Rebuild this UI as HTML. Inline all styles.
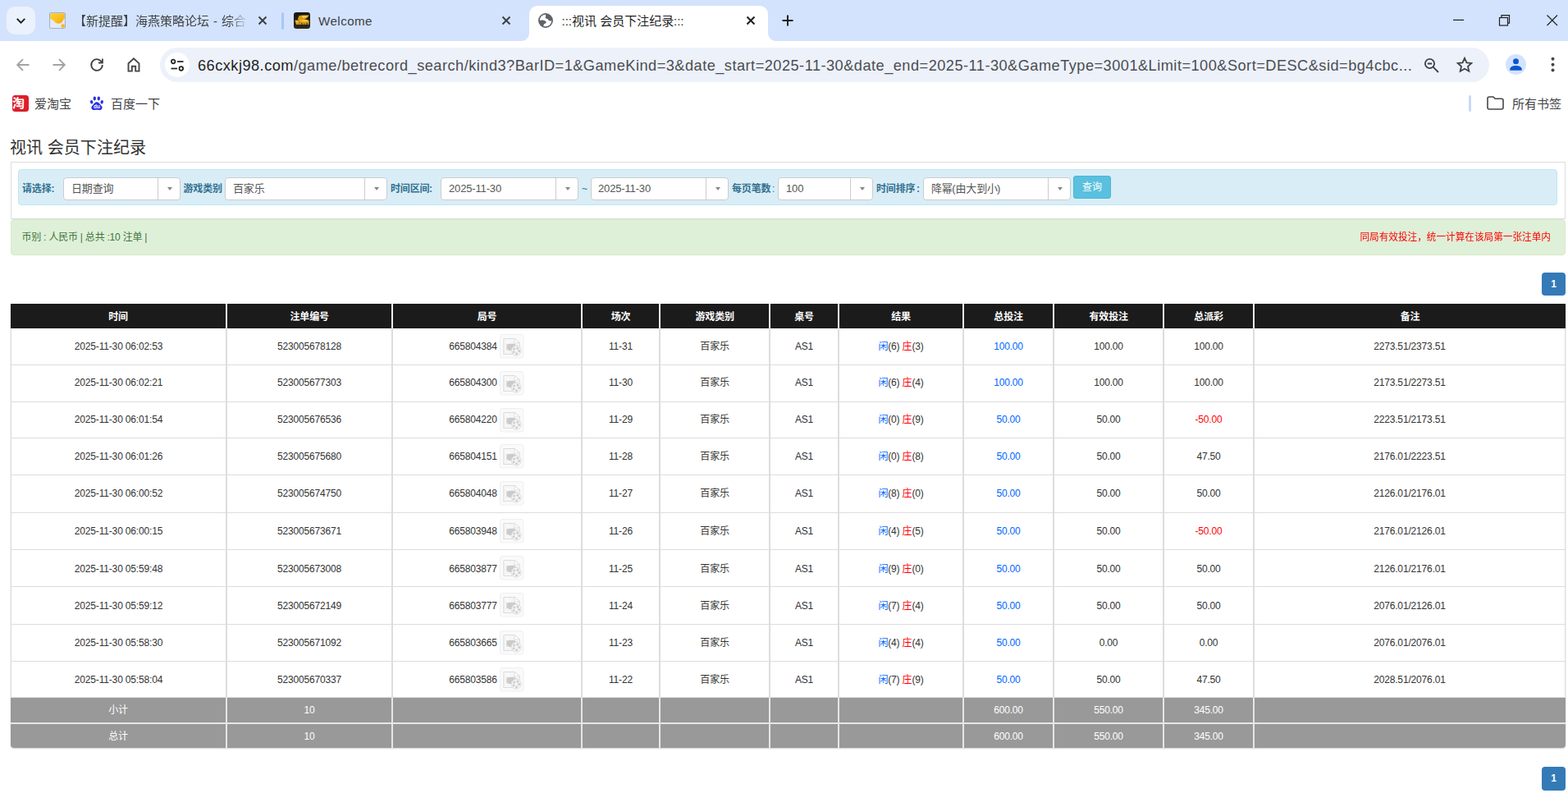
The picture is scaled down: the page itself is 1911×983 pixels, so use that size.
<!DOCTYPE html>
<html lang="zh-CN">
<head>
<meta charset="utf-8">
<title>:::视讯 会员下注纪录:::</title>
<style>
html,body{margin:0;padding:0}
body{width:1911px;height:983px;overflow:hidden;position:relative;background:#fff;font-family:"Liberation Sans","Noto Sans CJK SC",sans-serif;color:#333}
.abs{position:absolute}
.cj{display:inline-block;position:relative;white-space:nowrap;text-align:justify;text-align-last:justify;text-justify:inter-character;vertical-align:top}
svg{display:block}
/* ---------- browser chrome ---------- */
#tabstrip{position:absolute;left:0;top:0;width:1911px;height:50px;background:#d3e3fd}
#toolbar{position:absolute;left:0;top:50px;width:1911px;height:59px;background:#fff;border-top-left-radius:10px}
#bmbar{position:absolute;left:0;top:108px;width:1911px;height:38px;background:#fff}
.tabtxt{position:absolute;top:16px;height:20px;line-height:20px;font-size:15px;color:#3f4246;white-space:nowrap;overflow:hidden}
#tabsearch{position:absolute;left:8px;top:8px;width:35px;height:34px;border-radius:10px;background:#ebf1fd}
#acttab{position:absolute;left:645px;top:7px;width:291px;height:43px;background:#fff;border-radius:10px 10px 0 0}
#acttab:before,#acttab:after{content:"";position:absolute;bottom:0;width:10px;height:10px}
#acttab:before{left:-10px;background:radial-gradient(circle at 0 0,rgba(255,255,255,0) 9.5px,#fff 10.5px)}
#acttab:after{right:-10px;background:radial-gradient(circle at 100% 0,rgba(255,255,255,0) 9.5px,#fff 10.5px)}
#omni{position:absolute;left:195px;top:58px;width:1620px;height:42px;border-radius:21px;background:#edf1fa}
#siteinfo{position:absolute;left:201px;top:64px;width:30px;height:30px;border-radius:50%;background:#fff}
#url{position:absolute;left:241px;top:68px;height:24px;line-height:24px;font-size:18.200px;letter-spacing:.48px;color:#4a4d51;white-space:nowrap}
#url b{font-weight:normal;color:#1f1f1f}
.bm{position:absolute;top:117px;height:20px;line-height:20px;font-size:15px;color:#3f4246;white-space:nowrap}
/* ---------- page ---------- */
#title{position:absolute;left:12px;top:166px;height:28px;line-height:28px;font-size:20px;color:#333;white-space:nowrap}
#fbox{position:absolute;left:13px;top:197px;width:1893px;height:68px;border:1px solid #ddd;background:#fff}
#fin{position:absolute;left:22px;top:206px;width:1874px;height:42px;border:1px solid #bce8f1;border-radius:4px;background:#d9edf7}
.lb{position:absolute;top:221px;height:18px;line-height:18px;font-size:12px;letter-spacing:-.16px;font-weight:bold;color:#31708f;white-space:nowrap}
.sel{position:absolute;top:216px;height:26px;border:1px solid #ccc;border-radius:4px;background:#fff;box-sizing:content-box}
.sel .tx{position:absolute;left:9px;top:0;height:26px;line-height:26px;font-size:13px;letter-spacing:-.15px;color:#555;white-space:nowrap}
.sel .dv{position:absolute;right:26px;top:0;width:1px;height:26px;background:#ccc}
.sel .ar{position:absolute;right:9px;top:11px;width:0;height:0;border-left:3.500px solid transparent;border-right:3.500px solid transparent;border-top:4px solid #888}
#qbtn{position:absolute;left:1308px;top:214px;width:44px;height:26px;border:1px solid #46b8da;border-radius:3px;background:#5bc0de;color:#fff;font-size:12px;line-height:26px;text-align:center}
#gbar{position:absolute;left:13px;top:267px;width:1893px;height:42px;border:1px solid #d6e9c6;border-radius:4px;background:#dff0d8}
#gl{position:absolute;left:26.500px;top:279px;height:20px;line-height:20px;font-size:12px;letter-spacing:-.16px;color:#3c763d;white-space:nowrap}
#gr{position:absolute;right:21px;top:279px;height:20px;line-height:20px;font-size:12px;color:#f00;white-space:nowrap}
.pg{position:absolute;left:1879px;width:29px;border-radius:4px;background:#337ab7;color:#fff;font-weight:bold;font-size:12px;text-align:center}
table.grid{position:absolute;left:13px;top:370px;width:1895px;table-layout:fixed;border-collapse:separate;border-spacing:0;font-size:12px;letter-spacing:-.16px;color:#333;box-shadow:0 1px 2px rgba(0,0,0,.18);border-radius:0 0 4px 4px}
table.grid th,table.grid td{padding:0;line-height:14px;text-align:center;vertical-align:middle;box-sizing:border-box;white-space:nowrap;overflow:hidden}
table.grid th{height:30px;padding-top:2px;background:#1b1b1b;color:#fff;font-weight:bold;border-right:2px solid #ededed}
table.grid th:last-child{border-right:0}
table.grid tbody td{height:45px;border-right:2px solid #ddd;border-bottom:1px solid #ddd;background:#fff}
table.grid tbody td:first-child{border-left:1px solid #ddd}
table.grid tbody td:last-child{border-right:1px solid #ddd}
table.grid tfoot td{height:29px;background:#999;color:#fff;border-right:2px solid #e6e6e6}
table.grid tfoot td:last-child{border-right:0}
table.grid tfoot tr.f1 td{height:32px;border-bottom:2px solid #e6e6e6}
table.grid tfoot tr.f2 td:first-child{border-bottom-left-radius:4px}
table.grid tfoot tr.f2 td:last-child{border-bottom-right-radius:4px}
.b{color:#06f}.r{color:#f00}.neg{color:#f00}
span.b,span.r{width:11.840px;text-align:center;text-align-last:center;letter-spacing:0}
td.ju{position:relative}
td.ju .jn{position:relative;left:-17px}
td.ju svg.vid{position:absolute;left:130.400px;top:7px}
table.grid tbody tr.r0 td{height:45px;padding-bottom:0px}table.grid tbody tr.r1 td{height:45px;padding-bottom:2px}table.grid tbody tr.r2 td{height:44px;padding-bottom:2px}table.grid tbody tr.r3 td{height:45px;padding-bottom:0px}table.grid tbody tr.r4 td{height:46px;padding-bottom:1px}table.grid tbody tr.r5 td{height:45px;padding-bottom:0px}table.grid tbody tr.r6 td{height:45px;padding-top:1px}table.grid tbody tr.r7 td{height:46px;padding-bottom:0px}table.grid tbody tr.r8 td{height:45px;padding-bottom:0px}table.grid tbody tr.r9 td{height:44px;padding-bottom:0px}
</style>
</head>
<body>
<!-- ================= browser chrome ================= -->
<div id="tabstrip"></div>
<div id="tabsearch"><svg class="abs" style="left:12px;top:13.500px" width="11" height="8" viewBox="0 0 11 8"><path d="M1.400 1.500l4.100 4.100 4.100-4.100" fill="none" stroke="#1f1f1f" stroke-width="1.900" stroke-linecap="square"/></svg></div>

<!-- tab 1 -->
<svg class="abs" style="left:60px;top:15px" width="20" height="20" viewBox="0 0 20 20"><defs><linearGradient id="fg1" x1="0" y1="0" x2="1" y2="1"><stop offset="0" stop-color="#fdd32a"/><stop offset=".5" stop-color="#fcc21e"/><stop offset="1" stop-color="#f2a024"/></linearGradient></defs><rect x=".5" y=".5" width="19" height="19" rx="1.500" fill="#e3eaf5" stroke="#9cb0d3"/><path d="M1.200 1.200h17.600v6.200c-1 .7-1.600 1.400-1.900 2.400a6.100 6.100 0 0 1-10.800 1.300C5 9.800 3 9 1.200 7.600z" fill="url(#fg1)"/><circle cx="16.700" cy="16.600" r="2.300" fill="#fbb51c"/></svg>
<div class="tabtxt" style="left:90px;width:210px;-webkit-mask-image:linear-gradient(90deg,#000 190px,transparent 212px);mask-image:linear-gradient(90deg,#000 190px,transparent 212px)"><span class="cj" style="width:165px">【新提醒】海燕策略论坛</span><span style="display:inline-block;width:15px;text-align:center">-</span><span class="cj" style="width:60px">综合讨论</span></div>
<svg class="abs" style="left:314px;top:19px" width="12" height="12" viewBox="0 0 12 12"><path d="M1.5 1.5l9 9M10.5 1.5l-9 9" stroke="#3a3d41" stroke-width="1.900" fill="none"/></svg>
<div class="abs" style="left:343px;top:15px;width:3px;height:21px;border-radius:1.5px;background:#a8c7fa"></div>

<!-- tab 2 -->
<svg class="abs" style="left:358px;top:15px" width="20" height="20" viewBox="0 0 20 20"><defs><linearGradient id="fg2" x1="0" y1="0" x2="0" y2="1"><stop offset="0" stop-color="#161616"/><stop offset="1" stop-color="#2a2927"/></linearGradient></defs><rect width="20" height="20" rx="3.200" fill="url(#fg2)"/><g fill="#dc9a10"><path d="M5.800 4.400c3.500-1 8.500-.7 13-.8-1.200 2.600-3.800 4.700-7 5.600L7.500 9.500z"/><ellipse cx="13" cy="11" rx="5.900" ry="2.500"/><circle cx="7.600" cy="7.800" r="2.500"/><path d="M1.200 9.700l6.600-.4-1.300 5.600H3.100z"/><path d="M7.500 12h1.900v3.100H6.900zM10.800 12.500h1.700v2.600h-2.100zM13.600 12.500h1.700v2.600h-2.100zM16.800 11.500h1.800l-.3 3.600h-1.900z"/></g><g fill="#f7d054"><path d="M9.500 4.600c2.500-.5 5.500-.4 8-.4-1.500 1.400-3.500 2.300-6 2.800z"/><ellipse cx="13.200" cy="10.300" rx="3.800" ry="1.100"/><circle cx="8.300" cy="10.300" r=".9"/><circle cx="4" cy="11.600" r="1"/></g></svg>
<div class="tabtxt" style="left:388px;font-size:15.200px;letter-spacing:.42px">Welcome</div>
<svg class="abs" style="left:611px;top:19px" width="12" height="12" viewBox="0 0 12 12"><path d="M1.5 1.5l9 9M10.5 1.5l-9 9" stroke="#3a3d41" stroke-width="1.900" fill="none"/></svg>

<!-- active tab -->
<div id="acttab"></div>
<svg class="abs" style="left:656px;top:16px" width="18" height="18" viewBox="0 0 18 18"><circle cx="9" cy="9" r="8.100" fill="#fff" stroke="#5f6368" stroke-width="1.700"/><path d="M8.800 1.600c4.200-.4 7.600 2.700 8.200 6.600-1.400 1.800-3.400 1.500-4.600.300-.4-1.300-1.800-1.500-3.200-1.900-1-1.200.600-2.600-.400-5z" fill="#5f6368"/><path d="M1 9.100c2.900-1.200 6.500-.800 8.500 1.100.600 1.800-.600 2.500-2.200 2.900-1.200 1.100-.400 2.900-1.600 3.600C2.600 15.200 1 12.300 1 9.100z" fill="#5f6368"/></svg>
<div class="tabtxt" style="left:684.500px;color:#1f1f1f">:::<span class="cj" style="width:124px">视讯 会员下注纪录</span>:::</div>
<svg class="abs" style="left:909px;top:19px" width="12" height="12" viewBox="0 0 12 12"><path d="M1.5 1.5l9 9M10.5 1.5l-9 9" stroke="#1f1f1f" stroke-width="2" fill="none"/></svg>
<svg class="abs" style="left:953px;top:18px" width="14" height="14" viewBox="0 0 14 14"><path d="M7 .5v13M.5 7h13" stroke="#1f1f1f" stroke-width="2" fill="none"/></svg>

<!-- window controls -->
<svg class="abs" style="left:1771px;top:18px" width="14" height="14" viewBox="0 0 14 14"><path d="M0 6.400h13" stroke="#1f1f1f" stroke-width="1.200"/></svg>
<svg class="abs" style="left:1826px;top:17px" width="15" height="15" viewBox="0 0 15 15"><rect x="1.500" y="4.500" width="10" height="9.500" fill="none" stroke="#1f1f1f" stroke-width="1.200"/><path d="M4 4.500V1.600h9.500v9.500h-2" fill="none" stroke="#1f1f1f" stroke-width="1.200"/></svg>
<svg class="abs" style="left:1885px;top:18px" width="14" height="14" viewBox="0 0 14 14"><path d="M.5.500l12.500 12.500M13 .500L.5 13" stroke="#1f1f1f" stroke-width="1.100" fill="none"/></svg>

<!-- toolbar -->
<div id="toolbar"></div>
<svg class="abs" style="left:19px;top:70px" width="18" height="18" viewBox="0 0 18 18"><path d="M16.500 9H2.500M9 2.200L2.200 9 9 15.800" fill="none" stroke="#a3a3a3" stroke-width="1.900"/></svg>
<svg class="abs" style="left:63px;top:70px" width="18" height="18" viewBox="0 0 18 18"><path d="M1.500 9h14M9 2.200L15.800 9 9 15.800" fill="none" stroke="#a3a3a3" stroke-width="1.900"/></svg>
<svg class="abs" style="left:108px;top:69px" width="20" height="20" viewBox="0 0 20 20"><path d="M16.200 7.200A6.800 6.800 0 1 0 16.800 10" fill="none" stroke="#3f4246" stroke-width="1.800"/><path d="M16.900 2.500v5h-5" fill="none" stroke="#3f4246" stroke-width="1.800"/></svg>
<svg class="abs" style="left:153px;top:69px" width="20" height="20" viewBox="0 0 20 20"><path d="M3.500 8.300L10 2.300l6.500 6V17.600h-4.300v-5.900H7.800v5.900H3.500z" fill="none" stroke="#454746" stroke-width="1.900"/></svg>
<div id="omni"></div>
<div id="siteinfo"></div>
<svg class="abs" style="left:207px;top:71px" width="18" height="17" viewBox="0 0 18 17"><circle cx="4.200" cy="4" r="2.300" fill="none" stroke="#1f1f1f" stroke-width="1.700"/><path d="M9 4h7.500" stroke="#1f1f1f" stroke-width="1.700"/><circle cx="13.800" cy="12.500" r="2.300" fill="none" stroke="#1f1f1f" stroke-width="1.700"/><path d="M1.500 12.500H9" stroke="#1f1f1f" stroke-width="1.700"/></svg>
<div id="url"><b>66cxkj98.com</b>/game/betrecord_search/kind3?BarID=1&amp;GameKind=3&amp;date_start=2025-11-30&amp;date_end=2025-11-30&amp;GameType=3001&amp;Limit=100&amp;Sort=DESC&amp;sid=bg4cbc...</div>
<svg class="abs" style="left:1735px;top:70px" width="20" height="20" viewBox="0 0 20 20"><circle cx="7.500" cy="7.500" r="5.600" fill="none" stroke="#3f4246" stroke-width="1.800"/><path d="M11.700 11.700l6.300 6.300M4.800 7.500h5.400" stroke="#3f4246" stroke-width="1.800" fill="none"/></svg>
<svg class="abs" style="left:1775px;top:69px" width="20" height="20" viewBox="0 0 20 20"><path d="M10 1.800l2.500 5.500 6 .6-4.500 4 1.300 5.900L10 14.700l-5.300 3.100 1.300-5.900-4.500-4 6-.6z" fill="none" stroke="#3f4246" stroke-width="1.800" stroke-linejoin="miter"/></svg>
<div class="abs" style="left:1835px;top:66px;width:25px;height:25px;border-radius:50%;background:#d3e3fd"></div>
<svg class="abs" style="left:1839px;top:70px" width="17" height="17" viewBox="0 0 17 17"><circle cx="8.500" cy="4.800" r="3.500" fill="#0b57d0"/><path d="M1.300 15.800v-1.600c0-2.600 3.600-4.100 7.200-4.100s7.200 1.500 7.200 4.100v1.600z" fill="#0b57d0"/></svg>
<svg class="abs" style="left:1890px;top:69px" width="5" height="20" viewBox="0 0 5 20"><circle cx="2.500" cy="2.800" r="2" fill="#454746"/><circle cx="2.500" cy="9.800" r="2" fill="#454746"/><circle cx="2.500" cy="16.600" r="2" fill="#454746"/></svg>

<!-- bookmarks bar -->
<div id="bmbar"></div>
<div class="abs" style="left:15px;top:116px;width:20px;height:20px;border-radius:3.500px;background:#dc1e2a;color:#fff;font-size:15px;line-height:20px;text-align:center;font-weight:bold;overflow:hidden"><span class="cj" style="width:20px">淘</span></div>
<div class="bm" style="left:42px"><span class="cj" style="width:45px">爱淘宝</span></div>
<svg class="abs" style="left:109px;top:117px" width="18" height="18" viewBox="0 0 18 18"><g fill="#2932e1"><ellipse cx="2.700" cy="7.300" rx="1.700" ry="2.300" transform="rotate(-15 2.700 7.300)"/><ellipse cx="6.300" cy="3" rx="1.700" ry="2.400"/><ellipse cx="11.300" cy="3" rx="1.700" ry="2.400"/><ellipse cx="15.200" cy="7.300" rx="1.700" ry="2.300" transform="rotate(15 15.200 7.300)"/><path d="M9 7.200c2.200 0 3.200 1.900 4.700 3.500 1.700 1.700 2.300 3 1.700 4.600-.7 1.800-2.700 1.900-4 1.700-1-.2-1.600-.3-2.400-.3s-1.400.1-2.400.3c-1.300.2-3.300.1-4-1.700-.6-1.600 0-2.900 1.700-4.600C5.800 9.100 6.800 7.200 9 7.200z"/></g><text x="9" y="15.300" text-anchor="middle" font-family="Liberation Sans, sans-serif" font-weight="bold" font-size="6.500" fill="#fff">du</text></svg>
<div class="bm" style="left:135px"><span class="cj" style="width:60px">百度一下</span></div>
<div class="abs" style="left:1790px;top:116px;width:3px;height:20px;border-radius:1.500px;background:#c7d9f8"></div>
<svg class="abs" style="left:1812px;top:117px" width="21" height="17" viewBox="0 0 21 17"><path d="M1 3c0-1.100.9-2 2-2h5l2.200 2.300H18c1.100 0 2 .9 2 2V14c0 1.100-.9 2-2 2H3c-1.100 0-2-.9-2-2z" fill="none" stroke="#474747" stroke-width="1.600"/></svg>
<div class="bm" style="left:1843px"><span class="cj" style="width:60px">所有书签</span></div>

<!-- ================= page ================= -->
<div id="title"><span class="cj" style="width:166px">视讯 会员下注纪录</span></div>
<div id="fbox"></div>
<div id="fin"></div>
<div class="lb" style="left:27px"><span class="cj" style="width:35.500px">请选择</span>:</div>
<div class="sel" style="left:77px;width:141px"><span class="tx"><span class="cj" style="width:50.500px">日期查询</span></span><span class="dv"></span><span class="ar"></span></div>
<div class="lb" style="left:223.500px"><span class="cj" style="width:47px">游戏类别</span></div>
<div class="sel" style="left:274px;width:196px"><span class="tx"><span class="cj" style="width:38px">百家乐</span></span><span class="dv"></span><span class="ar"></span></div>
<div class="lb" style="left:476px"><span class="cj" style="width:47px">时间区间</span>:</div>
<div class="sel" style="left:537px;width:166px"><span class="tx">2025-11-30</span><span class="dv"></span><span class="ar"></span></div>
<div class="lb" style="left:709px;font-weight:normal">~</div>
<div class="sel" style="left:720px;width:166px"><span class="tx" style="left:8px">2025-11-30</span><span class="dv"></span><span class="ar"></span></div>
<div class="lb" style="left:892px"><span class="cj" style="width:47px">每页笔数</span><span style="font-weight:normal;margin-left:2px">:</span></div>
<div class="sel" style="left:948px;width:114px"><span class="tx">100</span><span class="dv"></span><span class="ar"></span></div>
<div class="lb" style="left:1068px"><span class="cj" style="width:47px">时间排序</span><span style="margin-left:2px">:</span></div>
<div class="sel" style="left:1125px;width:178px"><span class="tx"><span class="cj" style="width:25.300px">降幂</span>(<span class="cj" style="width:50.500px">由大到小</span>)</span><span class="dv"></span><span class="ar"></span></div>
<div id="qbtn"><span class="cj" style="width:24px">查询</span></div>
<div id="gbar"></div>
<div id="gl"><span class="cj" style="width:23.400px">币别</span> : <span class="cj" style="width:35.100px">人民币</span> | <span class="cj" style="width:23.400px">总共</span> :10 <span class="cj" style="width:23.400px">注单</span> |</div>
<div id="gr"><span class="cj" style="width:240px;transform:scaleX(.969);transform-origin:100% 50%">同局有效投注，统一计算在该局第一张注单内</span></div>
<div class="pg" style="top:332px;height:28px;line-height:28px">1</div>
<table class="grid"><colgroup><col style="width:264px"><col style="width:202px"><col style="width:231px"><col style="width:95px"><col style="width:134px"><col style="width:84px"><col style="width:152px"><col style="width:110px"><col style="width:134px"><col style="width:110px"><col style="width:379px"></colgroup>
<thead><tr><th><span class="cj" style="width:23.7px">时间</span></th><th><span class="cj" style="width:47.1px">注单编号</span></th><th><span class="cj" style="width:23.7px">局号</span></th><th><span class="cj" style="width:23.7px">场次</span></th><th><span class="cj" style="width:47.1px">游戏类别</span></th><th><span class="cj" style="width:23.7px">桌号</span></th><th><span class="cj" style="width:23.7px">结果</span></th><th><span class="cj" style="width:35.4px">总投注</span></th><th><span class="cj" style="width:47.1px">有效投注</span></th><th><span class="cj" style="width:35.4px">总派彩</span></th><th><span class="cj" style="width:23.7px">备注</span></th></tr></thead><tbody>
<tr class="r0"><td>2025-11-30 06:02:53</td><td>523005678128</td><td class="ju"><span class="jn">665804384</span><svg class="vid" width="29.400" height="29.600" viewBox="0 0 29 29" preserveAspectRatio="none"><rect x=".5" y=".5" width="28" height="28" rx="3.5" fill="#fafafa" stroke="#efefef"/><path d="M4.800 5.300h13l6.200 5.200v5.600M19.500 24H4.800V5.300" fill="#f6f6f6" stroke="#dcdcdc" stroke-width="1"/><path d="M17.8 5.4v5.2H24z" fill="#fff" stroke="#dcdcdc" stroke-width=".8"/><path d="M8.3 11.6l2 1.2v-1.3h8.4v2.2l2.2-1v5.6l-2.2-1v2.2h-8.4v-1.6l-2 1.3z" fill="#cbcbcb"/><circle cx="20" cy="19.8" r="5.9" fill="#f4f4f4" stroke="#dedede" stroke-width=".9"/><circle cx="17.4" cy="17.6" r="1.5" fill="#cfcfcf"/><circle cx="21.6" cy="16.8" r="1.5" fill="#cfcfcf"/><circle cx="23.4" cy="20.2" r="1.5" fill="#cfcfcf"/><circle cx="20.3" cy="23.2" r="1.5" fill="#cfcfcf"/><circle cx="16.8" cy="21.4" r="1.5" fill="#cfcfcf"/></svg></td><td>11-31</td><td><span class="cj" style="width:35.4px">百家乐</span></td><td>AS1</td><td><span class="cj b">闲</span>(6) <span class="cj r">庄</span>(3)</td><td class="b">100.00</td><td>100.00</td><td>100.00</td><td>2273.51/2373.51</td></tr>
<tr class="r1"><td>2025-11-30 06:02:21</td><td>523005677303</td><td class="ju"><span class="jn">665804300</span><svg class="vid" width="29.400" height="29.600" viewBox="0 0 29 29" preserveAspectRatio="none"><rect x=".5" y=".5" width="28" height="28" rx="3.5" fill="#fafafa" stroke="#efefef"/><path d="M4.800 5.300h13l6.200 5.200v5.600M19.500 24H4.800V5.300" fill="#f6f6f6" stroke="#dcdcdc" stroke-width="1"/><path d="M17.8 5.4v5.2H24z" fill="#fff" stroke="#dcdcdc" stroke-width=".8"/><path d="M8.3 11.6l2 1.2v-1.3h8.4v2.2l2.2-1v5.6l-2.2-1v2.2h-8.4v-1.6l-2 1.3z" fill="#cbcbcb"/><circle cx="20" cy="19.8" r="5.9" fill="#f4f4f4" stroke="#dedede" stroke-width=".9"/><circle cx="17.4" cy="17.6" r="1.5" fill="#cfcfcf"/><circle cx="21.6" cy="16.8" r="1.5" fill="#cfcfcf"/><circle cx="23.4" cy="20.2" r="1.5" fill="#cfcfcf"/><circle cx="20.3" cy="23.2" r="1.5" fill="#cfcfcf"/><circle cx="16.8" cy="21.4" r="1.5" fill="#cfcfcf"/></svg></td><td>11-30</td><td><span class="cj" style="width:35.4px">百家乐</span></td><td>AS1</td><td><span class="cj b">闲</span>(6) <span class="cj r">庄</span>(4)</td><td class="b">100.00</td><td>100.00</td><td>100.00</td><td>2173.51/2273.51</td></tr>
<tr class="r2"><td>2025-11-30 06:01:54</td><td>523005676536</td><td class="ju"><span class="jn">665804220</span><svg class="vid" width="29.400" height="29.600" viewBox="0 0 29 29" preserveAspectRatio="none"><rect x=".5" y=".5" width="28" height="28" rx="3.5" fill="#fafafa" stroke="#efefef"/><path d="M4.800 5.300h13l6.200 5.200v5.600M19.500 24H4.800V5.300" fill="#f6f6f6" stroke="#dcdcdc" stroke-width="1"/><path d="M17.8 5.4v5.2H24z" fill="#fff" stroke="#dcdcdc" stroke-width=".8"/><path d="M8.3 11.6l2 1.2v-1.3h8.4v2.2l2.2-1v5.6l-2.2-1v2.2h-8.4v-1.6l-2 1.3z" fill="#cbcbcb"/><circle cx="20" cy="19.8" r="5.9" fill="#f4f4f4" stroke="#dedede" stroke-width=".9"/><circle cx="17.4" cy="17.6" r="1.5" fill="#cfcfcf"/><circle cx="21.6" cy="16.8" r="1.5" fill="#cfcfcf"/><circle cx="23.4" cy="20.2" r="1.5" fill="#cfcfcf"/><circle cx="20.3" cy="23.2" r="1.5" fill="#cfcfcf"/><circle cx="16.8" cy="21.4" r="1.5" fill="#cfcfcf"/></svg></td><td>11-29</td><td><span class="cj" style="width:35.4px">百家乐</span></td><td>AS1</td><td><span class="cj b">闲</span>(0) <span class="cj r">庄</span>(9)</td><td class="b">50.00</td><td>50.00</td><td class="neg">-50.00</td><td>2223.51/2173.51</td></tr>
<tr class="r3"><td>2025-11-30 06:01:26</td><td>523005675680</td><td class="ju"><span class="jn">665804151</span><svg class="vid" width="29.400" height="29.600" viewBox="0 0 29 29" preserveAspectRatio="none"><rect x=".5" y=".5" width="28" height="28" rx="3.5" fill="#fafafa" stroke="#efefef"/><path d="M4.800 5.300h13l6.200 5.200v5.600M19.500 24H4.800V5.300" fill="#f6f6f6" stroke="#dcdcdc" stroke-width="1"/><path d="M17.8 5.4v5.2H24z" fill="#fff" stroke="#dcdcdc" stroke-width=".8"/><path d="M8.3 11.6l2 1.2v-1.3h8.4v2.2l2.2-1v5.6l-2.2-1v2.2h-8.4v-1.6l-2 1.3z" fill="#cbcbcb"/><circle cx="20" cy="19.8" r="5.9" fill="#f4f4f4" stroke="#dedede" stroke-width=".9"/><circle cx="17.4" cy="17.6" r="1.5" fill="#cfcfcf"/><circle cx="21.6" cy="16.8" r="1.5" fill="#cfcfcf"/><circle cx="23.4" cy="20.2" r="1.5" fill="#cfcfcf"/><circle cx="20.3" cy="23.2" r="1.5" fill="#cfcfcf"/><circle cx="16.8" cy="21.4" r="1.5" fill="#cfcfcf"/></svg></td><td>11-28</td><td><span class="cj" style="width:35.4px">百家乐</span></td><td>AS1</td><td><span class="cj b">闲</span>(0) <span class="cj r">庄</span>(8)</td><td class="b">50.00</td><td>50.00</td><td>47.50</td><td>2176.01/2223.51</td></tr>
<tr class="r4"><td>2025-11-30 06:00:52</td><td>523005674750</td><td class="ju"><span class="jn">665804048</span><svg class="vid" width="29.400" height="29.600" viewBox="0 0 29 29" preserveAspectRatio="none"><rect x=".5" y=".5" width="28" height="28" rx="3.5" fill="#fafafa" stroke="#efefef"/><path d="M4.800 5.300h13l6.200 5.200v5.600M19.500 24H4.800V5.300" fill="#f6f6f6" stroke="#dcdcdc" stroke-width="1"/><path d="M17.8 5.4v5.2H24z" fill="#fff" stroke="#dcdcdc" stroke-width=".8"/><path d="M8.3 11.6l2 1.2v-1.3h8.4v2.2l2.2-1v5.6l-2.2-1v2.2h-8.4v-1.6l-2 1.3z" fill="#cbcbcb"/><circle cx="20" cy="19.8" r="5.9" fill="#f4f4f4" stroke="#dedede" stroke-width=".9"/><circle cx="17.4" cy="17.6" r="1.5" fill="#cfcfcf"/><circle cx="21.6" cy="16.8" r="1.5" fill="#cfcfcf"/><circle cx="23.4" cy="20.2" r="1.5" fill="#cfcfcf"/><circle cx="20.3" cy="23.2" r="1.5" fill="#cfcfcf"/><circle cx="16.8" cy="21.4" r="1.5" fill="#cfcfcf"/></svg></td><td>11-27</td><td><span class="cj" style="width:35.4px">百家乐</span></td><td>AS1</td><td><span class="cj b">闲</span>(8) <span class="cj r">庄</span>(0)</td><td class="b">50.00</td><td>50.00</td><td>50.00</td><td>2126.01/2176.01</td></tr>
<tr class="r5"><td>2025-11-30 06:00:15</td><td>523005673671</td><td class="ju"><span class="jn">665803948</span><svg class="vid" width="29.400" height="29.600" viewBox="0 0 29 29" preserveAspectRatio="none"><rect x=".5" y=".5" width="28" height="28" rx="3.5" fill="#fafafa" stroke="#efefef"/><path d="M4.800 5.300h13l6.200 5.200v5.600M19.500 24H4.800V5.300" fill="#f6f6f6" stroke="#dcdcdc" stroke-width="1"/><path d="M17.8 5.4v5.2H24z" fill="#fff" stroke="#dcdcdc" stroke-width=".8"/><path d="M8.3 11.6l2 1.2v-1.3h8.4v2.2l2.2-1v5.6l-2.2-1v2.2h-8.4v-1.6l-2 1.3z" fill="#cbcbcb"/><circle cx="20" cy="19.8" r="5.9" fill="#f4f4f4" stroke="#dedede" stroke-width=".9"/><circle cx="17.4" cy="17.6" r="1.5" fill="#cfcfcf"/><circle cx="21.6" cy="16.8" r="1.5" fill="#cfcfcf"/><circle cx="23.4" cy="20.2" r="1.5" fill="#cfcfcf"/><circle cx="20.3" cy="23.2" r="1.5" fill="#cfcfcf"/><circle cx="16.8" cy="21.4" r="1.5" fill="#cfcfcf"/></svg></td><td>11-26</td><td><span class="cj" style="width:35.4px">百家乐</span></td><td>AS1</td><td><span class="cj b">闲</span>(4) <span class="cj r">庄</span>(5)</td><td class="b">50.00</td><td>50.00</td><td class="neg">-50.00</td><td>2176.01/2126.01</td></tr>
<tr class="r6"><td>2025-11-30 05:59:48</td><td>523005673008</td><td class="ju"><span class="jn">665803877</span><svg class="vid" width="29.400" height="29.600" viewBox="0 0 29 29" preserveAspectRatio="none"><rect x=".5" y=".5" width="28" height="28" rx="3.5" fill="#fafafa" stroke="#efefef"/><path d="M4.800 5.300h13l6.200 5.200v5.600M19.500 24H4.800V5.300" fill="#f6f6f6" stroke="#dcdcdc" stroke-width="1"/><path d="M17.8 5.4v5.2H24z" fill="#fff" stroke="#dcdcdc" stroke-width=".8"/><path d="M8.3 11.6l2 1.2v-1.3h8.4v2.2l2.2-1v5.6l-2.2-1v2.2h-8.4v-1.6l-2 1.3z" fill="#cbcbcb"/><circle cx="20" cy="19.8" r="5.9" fill="#f4f4f4" stroke="#dedede" stroke-width=".9"/><circle cx="17.4" cy="17.6" r="1.5" fill="#cfcfcf"/><circle cx="21.6" cy="16.8" r="1.5" fill="#cfcfcf"/><circle cx="23.4" cy="20.2" r="1.5" fill="#cfcfcf"/><circle cx="20.3" cy="23.2" r="1.5" fill="#cfcfcf"/><circle cx="16.8" cy="21.4" r="1.5" fill="#cfcfcf"/></svg></td><td>11-25</td><td><span class="cj" style="width:35.4px">百家乐</span></td><td>AS1</td><td><span class="cj b">闲</span>(9) <span class="cj r">庄</span>(0)</td><td class="b">50.00</td><td>50.00</td><td>50.00</td><td>2126.01/2176.01</td></tr>
<tr class="r7"><td>2025-11-30 05:59:12</td><td>523005672149</td><td class="ju"><span class="jn">665803777</span><svg class="vid" width="29.400" height="29.600" viewBox="0 0 29 29" preserveAspectRatio="none"><rect x=".5" y=".5" width="28" height="28" rx="3.5" fill="#fafafa" stroke="#efefef"/><path d="M4.800 5.300h13l6.200 5.200v5.600M19.500 24H4.800V5.300" fill="#f6f6f6" stroke="#dcdcdc" stroke-width="1"/><path d="M17.8 5.4v5.2H24z" fill="#fff" stroke="#dcdcdc" stroke-width=".8"/><path d="M8.3 11.6l2 1.2v-1.3h8.4v2.2l2.2-1v5.6l-2.2-1v2.2h-8.4v-1.6l-2 1.3z" fill="#cbcbcb"/><circle cx="20" cy="19.8" r="5.9" fill="#f4f4f4" stroke="#dedede" stroke-width=".9"/><circle cx="17.4" cy="17.6" r="1.5" fill="#cfcfcf"/><circle cx="21.6" cy="16.8" r="1.5" fill="#cfcfcf"/><circle cx="23.4" cy="20.2" r="1.5" fill="#cfcfcf"/><circle cx="20.3" cy="23.2" r="1.5" fill="#cfcfcf"/><circle cx="16.8" cy="21.4" r="1.5" fill="#cfcfcf"/></svg></td><td>11-24</td><td><span class="cj" style="width:35.4px">百家乐</span></td><td>AS1</td><td><span class="cj b">闲</span>(7) <span class="cj r">庄</span>(4)</td><td class="b">50.00</td><td>50.00</td><td>50.00</td><td>2076.01/2126.01</td></tr>
<tr class="r8"><td>2025-11-30 05:58:30</td><td>523005671092</td><td class="ju"><span class="jn">665803665</span><svg class="vid" width="29.400" height="29.600" viewBox="0 0 29 29" preserveAspectRatio="none"><rect x=".5" y=".5" width="28" height="28" rx="3.5" fill="#fafafa" stroke="#efefef"/><path d="M4.800 5.300h13l6.200 5.200v5.600M19.500 24H4.800V5.300" fill="#f6f6f6" stroke="#dcdcdc" stroke-width="1"/><path d="M17.8 5.4v5.2H24z" fill="#fff" stroke="#dcdcdc" stroke-width=".8"/><path d="M8.3 11.6l2 1.2v-1.3h8.4v2.2l2.2-1v5.6l-2.2-1v2.2h-8.4v-1.6l-2 1.3z" fill="#cbcbcb"/><circle cx="20" cy="19.8" r="5.9" fill="#f4f4f4" stroke="#dedede" stroke-width=".9"/><circle cx="17.4" cy="17.6" r="1.5" fill="#cfcfcf"/><circle cx="21.6" cy="16.8" r="1.5" fill="#cfcfcf"/><circle cx="23.4" cy="20.2" r="1.5" fill="#cfcfcf"/><circle cx="20.3" cy="23.2" r="1.5" fill="#cfcfcf"/><circle cx="16.8" cy="21.4" r="1.5" fill="#cfcfcf"/></svg></td><td>11-23</td><td><span class="cj" style="width:35.4px">百家乐</span></td><td>AS1</td><td><span class="cj b">闲</span>(4) <span class="cj r">庄</span>(4)</td><td class="b">50.00</td><td>0.00</td><td>0.00</td><td>2076.01/2076.01</td></tr>
<tr class="r9"><td>2025-11-30 05:58:04</td><td>523005670337</td><td class="ju"><span class="jn">665803586</span><svg class="vid" width="29.400" height="29.600" viewBox="0 0 29 29" preserveAspectRatio="none"><rect x=".5" y=".5" width="28" height="28" rx="3.5" fill="#fafafa" stroke="#efefef"/><path d="M4.800 5.300h13l6.200 5.200v5.600M19.500 24H4.800V5.300" fill="#f6f6f6" stroke="#dcdcdc" stroke-width="1"/><path d="M17.8 5.4v5.2H24z" fill="#fff" stroke="#dcdcdc" stroke-width=".8"/><path d="M8.3 11.6l2 1.2v-1.3h8.4v2.2l2.2-1v5.6l-2.2-1v2.2h-8.4v-1.6l-2 1.3z" fill="#cbcbcb"/><circle cx="20" cy="19.8" r="5.9" fill="#f4f4f4" stroke="#dedede" stroke-width=".9"/><circle cx="17.4" cy="17.6" r="1.5" fill="#cfcfcf"/><circle cx="21.6" cy="16.8" r="1.5" fill="#cfcfcf"/><circle cx="23.4" cy="20.2" r="1.5" fill="#cfcfcf"/><circle cx="20.3" cy="23.2" r="1.5" fill="#cfcfcf"/><circle cx="16.8" cy="21.4" r="1.5" fill="#cfcfcf"/></svg></td><td>11-22</td><td><span class="cj" style="width:35.4px">百家乐</span></td><td>AS1</td><td><span class="cj b">闲</span>(7) <span class="cj r">庄</span>(9)</td><td class="b">50.00</td><td>50.00</td><td>47.50</td><td>2028.51/2076.01</td></tr>
</tbody><tfoot>
<tr class="f1"><td><span class="cj" style="width:23.7px">小计</span></td><td>10</td><td></td><td></td><td></td><td></td><td></td><td>600.00</td><td>550.00</td><td>345.00</td><td></td></tr>
<tr class="f2"><td><span class="cj" style="width:23.7px">总计</span></td><td>10</td><td></td><td></td><td></td><td></td><td></td><td>600.00</td><td>550.00</td><td>345.00</td><td></td></tr>
</tfoot></table>
<div class="pg" style="top:934px;height:29px;line-height:28px">1</div>
</body>
</html>
